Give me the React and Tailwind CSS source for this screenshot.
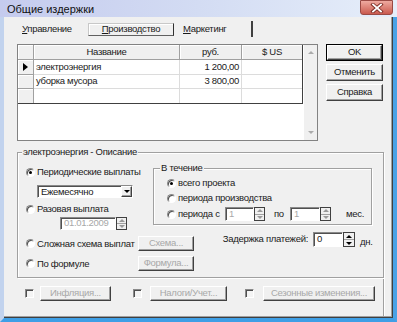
import React from "react";

const FONT = "font-['Liberation_Sans',Arial,sans-serif]";

function Radio({ checked }) {
  return (
    <span className="inline-flex h-[9px] w-[9px] shrink-0 items-center justify-center rounded-full border border-t-[#8a8a8a] border-l-[#8a8a8a] border-r-white border-b-white bg-white shadow-[inset_1px_1px_0_#505050]">
      {checked && <span className="h-[3px] w-[3px] rounded-full bg-black" />}
    </span>
  );
}

function Check() {
  return (
    <span className="block h-[9px] w-[9px] shrink-0 border border-t-[#8a8a8a] border-l-[#8a8a8a] border-r-white border-b-white bg-[#f4f4f4] shadow-[inset_1px_1px_0_#505050]" />
  );
}

function Btn({ children, disabled, className = "" }) {
  return (
    <div
      className={`flex items-center justify-center border border-t-white border-l-white border-r-[#404040] border-b-[#404040] bg-[#f0f0f0] shadow-[inset_-1px_-1px_0_#a0a0a0] ${
        disabled ? "text-[#a8a8a8]" : "text-[#1a1a1a]"
      } ${className}`}
    >
      {children}
    </div>
  );
}

function Field({ value, disabled, className = "" }) {
  return (
    <div
      className={`flex items-center border border-t-[#8a8a8a] border-l-[#8a8a8a] border-r-white border-b-white bg-white pl-[3px] shadow-[inset_1px_1px_0_#505050] ${
        disabled ? "text-[#a8a8a8]" : "text-[#1a1a1a]"
      } ${className}`}
    >
      {value}
    </div>
  );
}

function Spin({ dim, className = "" }) {
  const arrow = dim ? "#9a9a9a" : "#000";
  return (
    <div className={`flex w-[11px] flex-col border border-[#404040] bg-[#f0f0f0] ${className}`}>
      <div className="flex flex-1 items-center justify-center border-b border-[#a0a0a0]">
        <span
          className="h-0 w-0 border-x-[3px] border-x-transparent border-b-[3px]"
          style={{ borderBottomColor: arrow }}
        />
      </div>
      <div className="flex flex-1 items-center justify-center">
        <span
          className="h-0 w-0 border-x-[3px] border-x-transparent border-t-[3px]"
          style={{ borderTopColor: arrow }}
        />
      </div>
    </div>
  );
}

function Option({ checked, children, className = "" }) {
  return (
    <div className={`flex items-center gap-[2px] ${className}`}>
      <Radio checked={checked} />
      <span className="leading-none">{children}</span>
    </div>
  );
}

const rows = [
  { name: "электроэнергия", rub: "1 200,00", active: true, h: "h-[15px]" },
  { name: "уборка мусора", rub: "3 800,00", h: "h-[14px]" },
  { name: "", rub: "", h: "h-[14px]" },
];

function Grid() {
  return (
    <div className="flex h-[97px] w-[301px] border border-[#828282] bg-white">
      <div className="w-[286px]">
        <div className="w-[285px] border-r border-b border-[#404040]">
          <div className="flex h-[15px]">
            <div className="w-[16px] border-r border-b border-[#a0a0a0] bg-[#f0f0f0] shadow-[inset_1px_1px_0_#fff]" />
            <div className="flex w-[146px] items-center justify-center border-r border-b border-[#a0a0a0] bg-[#f0f0f0] shadow-[inset_1px_1px_0_#fff]">
              Название
            </div>
            <div className="flex w-[62px] items-center justify-center border-r border-b border-[#a0a0a0] bg-[#f0f0f0] shadow-[inset_1px_1px_0_#fff]">
              руб.
            </div>
            <div className="flex w-[60px] items-center justify-center border-b border-[#a0a0a0] bg-[#f0f0f0] shadow-[inset_1px_1px_0_#fff]">
              $ US
            </div>
          </div>
          {rows.map((r, i) => (
            <div key={i} className={`flex ${r.h}`}>
              <div
                className={`flex w-[16px] items-center justify-center border-r border-[#a0a0a0] bg-[#f0f0f0] shadow-[inset_1px_1px_0_#fff] ${
                  i < 2 ? "border-b" : ""
                }`}
              >
                {r.active && (
                  <span className="h-0 w-0 border-y-[4px] border-y-transparent border-l-[5px] border-l-black" />
                )}
              </div>
              <div className={`flex w-[146px] items-center border-r border-[#dcdcdc] pl-[2px] ${i < 2 ? "border-b" : ""}`}>
                {r.name}
              </div>
              <div className={`flex w-[62px] items-center justify-end border-r border-[#dcdcdc] pr-[2px] ${i < 2 ? "border-b" : ""}`}>
                {r.rub}
              </div>
              <div className={`w-[60px] border-[#dcdcdc] ${i < 2 ? "border-b" : ""}`} />
            </div>
          ))}
        </div>
      </div>
      <div className="flex w-[13px] flex-col items-center justify-between bg-[#f0f0f0] py-[6px]">
        <span className="h-0 w-0 border-x-[3px] border-x-transparent border-b-[3px] border-b-[#ababab]" />
        <span className="h-0 w-0 border-x-[3px] border-x-transparent border-t-[3px] border-t-[#ababab]" />
      </div>
    </div>
  );
}

export default function App() {
  return (
    <div className={`flex h-[322px] w-[397px] flex-col overflow-hidden whitespace-nowrap text-[9.5px] tracking-[-0.3px] text-[#1a1a1a] ${FONT}`}>
      <div className="flex h-[17px] shrink-0 bg-gradient-to-r from-[#c5cbee] via-[#d3dcf3] to-[#e6eefa]">
        <span className="ml-[7px] mt-[2px] text-[11px] leading-[14px] tracking-normal text-[#111]">Общие издержки</span>
        <div className="ml-auto mr-[4px] flex h-[15px] w-[33px] items-center justify-center rounded-b-[3px] border border-[#9a4a44] bg-gradient-to-b from-[#eeaaa0] to-[#c9594e]">
          <svg width="14" height="10" viewBox="0 0 14 10">
            <path d="M3 1.5l8 7M11 1.5l-8 7" stroke="#7a2c24" strokeWidth="3.6" strokeLinecap="square" />
            <path d="M3 1.5l8 7M11 1.5l-8 7" stroke="#fff" strokeWidth="1.8" strokeLinecap="square" />
          </svg>
        </div>
      </div>

      <div className="flex flex-1 border-l-4 border-r-4 border-b-4 border-l-[#c2d3ee] border-r-[#4aa2e6] border-b-[#3f9fe6]">
        <div className="flex flex-1 flex-col border-r border-b border-[#404040] bg-[#f0f0f0] pl-[13px] pt-[4px] shadow-[inset_-1px_-1px_0_#a0a0a0]">
          <div className="flex">
            <div className="w-[301px]">
              <div className="flex h-[16px]">
                <div className="flex w-[71px] items-center pl-[5px] pt-[1px]">
                  <span>
                    <span className="underline">У</span>правление
                  </span>
                </div>
                <div className="mt-[2px] flex h-[13px] w-[86px] items-center justify-center border border-t-[#c8c8c8] border-l-[#c8c8c8] border-r-[#303030] border-b-[#606060] shadow-[inset_1px_1px_0_#fff]">
                  <span>
                    <span className="underline">П</span>роизводство
                  </span>
                </div>
                <div className="flex w-[79px] items-center border-r-2 border-[#404040] pl-[9px] pt-[1px]">
                  <span>
                    <span className="underline">М</span>аркетинг
                  </span>
                </div>
              </div>
              <div className="mt-[7px]">
                <Grid />
              </div>
            </div>
            <div className="ml-[8px] mt-[23px] flex flex-col gap-[3px]">
              <div className="border border-black">
                <Btn className="h-[15px] w-[55px]">OK</Btn>
              </div>
              <Btn className="h-[17px] w-[57px]">Отменить</Btn>
              <Btn className="h-[17px] w-[57px]">Справка</Btn>
            </div>
          </div>

          <div className="relative mt-[11px] h-[126px] w-[367px] border border-[#a0a0a0] shadow-[inset_1px_1px_0_#fff,1px_1px_0_#fff]">
            <span className="absolute left-[4px] top-[-7px] bg-[#f0f0f0] px-[1px] leading-[12px]">
              электроэнергия - Описание
            </span>

            <div className="flex">
              <div className="w-[135px] pl-[8px] pt-[13px]">
                <Option checked className="h-[12px]">Периодические выплаты</Option>
                <div className="ml-[11px] mt-[7px] flex h-[13px] w-[96px] border border-t-[#8a8a8a] border-l-[#8a8a8a] border-r-white border-b-white bg-white shadow-[inset_1px_1px_0_#505050]">
                  <span className="flex-1 pl-[3px] leading-[11px]">Ежемесячно</span>
                  <Btn className="w-[11px]">
                    <span className="h-0 w-0 border-x-[3px] border-x-transparent border-t-[3px] border-t-black" />
                  </Btn>
                </div>
                <Option className="mt-[5px] h-[12px]">Разовая выплата</Option>
                <div className="ml-[34px] mt-[2px] flex h-[13px]">
                  <Field disabled value="01.01.2009" className="w-[56px]" />
                  <Spin dim />
                </div>
              </div>

              <div className="relative mt-[15px] h-[57px] w-[219px] border border-[#a0a0a0] shadow-[inset_1px_1px_0_#fff,1px_1px_0_#fff]">
                <span className="absolute left-[6px] top-[-7px] bg-[#f0f0f0] px-[1px] leading-[12px]">В течение</span>
                <div className="flex flex-col gap-[3px] pl-[13px] pt-[8px]">
                  <Option checked className="h-[12px]">всего проекта</Option>
                  <Option className="h-[12px]">периода производства</Option>
                  <div className="flex h-[14px] items-center">
                    <Option className="w-[58px]">периода с</Option>
                    <Field disabled value="1" className="h-[14px] w-[29px]" />
                    <Spin dim className="h-[14px]" />
                    <span className="ml-[9px] w-[16px]">по</span>
                    <Field disabled value="1" className="h-[14px] w-[30px]" />
                    <Spin dim className="h-[14px]" />
                    <span className="ml-[15px]">мес.</span>
                  </div>
                </div>
              </div>
            </div>

            <div className="mt-[2px] flex h-[19px] items-start">
              <Option className="mt-[4px] h-[15px] w-[120px] pl-[8px]">Сложная схема выплат</Option>
              <Btn disabled className="mt-[4px] h-[15px] w-[56px]">Схема...</Btn>
              <div className="flex h-[15px] w-[119px] items-center justify-end pr-[5px]">Задержка платежей:</div>
              <Field value="0" className="h-[15px] w-[30px]" />
              <Spin className="h-[15px] w-[12px]" />
              <span className="ml-[5px] mt-[3px]">дн.</span>
            </div>

            <div className="mt-[5px] flex h-[15px] items-center">
              <Option className="w-[120px] pl-[8px]">По формуле</Option>
              <Btn disabled className="h-[15px] w-[56px]">Формула...</Btn>
            </div>
          </div>

          <div className="h-[38px] w-[367px] border-r border-[#a0a0a0] shadow-[1px_0_0_#fff]">
            <div className="mt-[8px] flex h-[15px] items-center pl-[8px]">
              <Check />
              <Btn disabled className="ml-[6px] h-[15px] w-[71px]">Инфляция...</Btn>
              <div className="ml-[22px]">
                <Check />
              </div>
              <Btn disabled className="ml-[8px] h-[15px] w-[77px]">Налоги/Учет...</Btn>
              <div className="ml-[18px]">
                <Check />
              </div>
              <Btn disabled className="ml-[9px] h-[15px] w-[112px]">Сезонные изменения...</Btn>
            </div>
          </div>
        </div>
      </div>
    </div>
  );
}
